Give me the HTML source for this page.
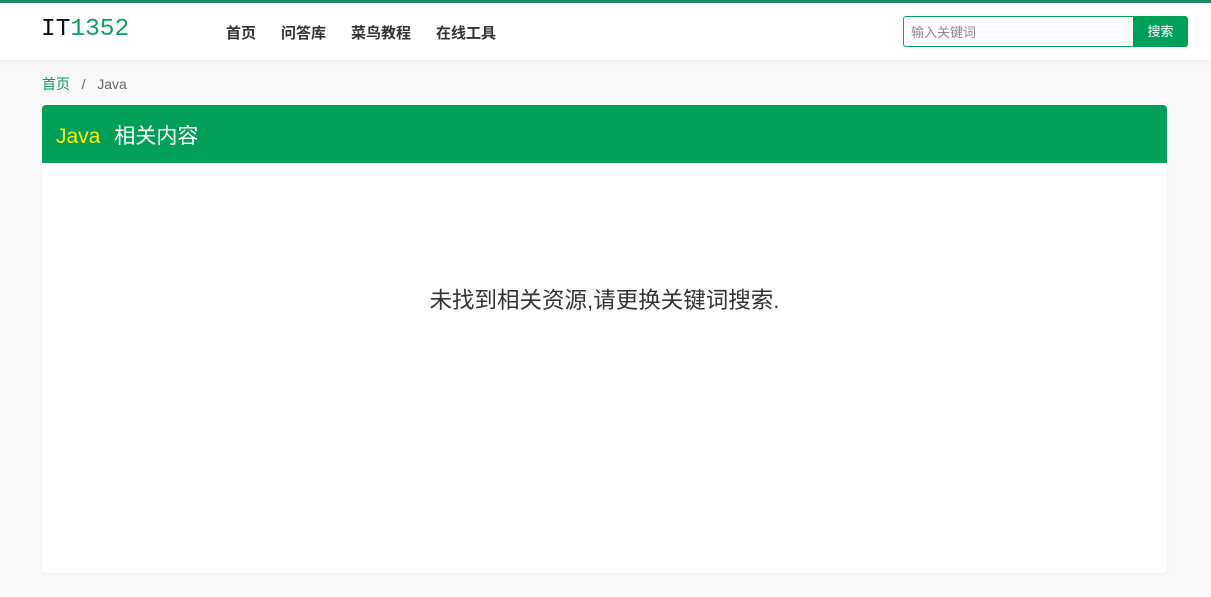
<!DOCTYPE html>
<html><head><meta charset="utf-8"><style>
*{margin:0;padding:0;box-sizing:border-box}
body{width:1211px;height:597px;background:#f9f9f9;font-family:"Liberation Sans","Noto Sans CJK SC",sans-serif;overflow:hidden;position:relative}
.top{position:absolute;left:0;top:0;width:1211px;height:3px;background:#1f8a66}
.hdr{position:absolute;left:0;top:3px;width:1211px;height:57px;background:#fff;box-shadow:0 2px 4px rgba(0,0,0,.06)}
.logo{position:absolute;left:41px;top:13px;font-family:"Liberation Mono",monospace;font-size:24.5px;color:#111}
.logo span{color:#0aa060}
.nav{position:absolute;top:19px;font-size:15px;font-weight:bold;color:#333}
.search{position:absolute;left:903px;top:13px;width:231px;height:31px;border:1px solid #0aa060;border-radius:3px 0 0 3px;font-size:13px;color:#888;padding:5px 7px}
.btn{position:absolute;left:1133px;top:13px;width:55px;height:31px;background:#00a05a;border-radius:0 3px 3px 0;color:#fff;font-size:13px;text-align:center;line-height:31px}
.bc{position:absolute;left:42px;top:74px;font-size:14px;color:#666}
.bc a{color:#0a9960}
.card{position:absolute;left:42px;top:105px;width:1125px;height:468px;background:#fff;border-radius:4px;box-shadow:0 1px 3px rgba(0,0,0,.04)}
.ch{height:58px;background:#00a05a;border-radius:4px 4px 0 0;color:#fff;font-size:21px;padding:15px 14px}
.ch span{color:#ffef00;margin-right:14px}
.msg{position:absolute;left:0;width:100%;top:178px;text-align:center;font-size:22.5px;color:#333}
</style></head><body>
<div class="top"></div>
<div class="hdr">
<div class="logo">IT<span>1352</span></div>
<div class="nav" style="left:226px">首页</div>
<div class="nav" style="left:281px">问答库</div>
<div class="nav" style="left:351px">菜鸟教程</div>
<div class="nav" style="left:436px">在线工具</div>
<div class="search">输入关键词</div>
<div class="btn">搜索</div>
</div>
<div class="bc"><a>首页</a>&nbsp;&nbsp; / &nbsp;&nbsp;Java</div>
<div class="card"><div class="ch"><span>Java</span>相关内容</div>
<div class="msg">未找到相关资源,请更换关键词搜索.</div></div>
</body></html>
